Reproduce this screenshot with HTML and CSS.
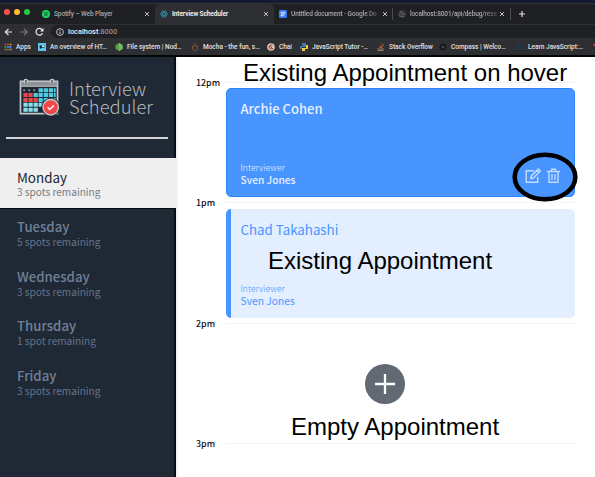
FILE: index.html
```html
<!DOCTYPE html>
<html lang="en">
<head>
<meta charset="utf-8">
<title>Interview Scheduler</title>
<link rel="stylesheet" href="styles.css">
</head>
<body>
<header class="browser">
  <div class="tabs">
    <div class="lights"><i class="red"></i><i class="yellow"></i><i class="green"></i></div>
    <div class="tab tab-spotify">
      <svg class="fav" viewBox="0 0 8 8"><circle cx="4" cy="4" r="4" fill="#1ed760"/><path d="M1.8 2.8q2.5-.8 4.6.4M2 4.2q2-.6 3.8.3M2.2 5.4q1.7-.4 3 .3" stroke="#14532d" stroke-width=".8" fill="none"/></svg>
      <span class="label">Spotify – Web Player</span><svg class="x" viewBox="0 0 6 6"><path d="M1 1l4 4M5 1L1 5"/></svg>
    </div>
    <div class="tab tab-active">
      <svg class="fav" viewBox="0 0 8 8" fill="none" stroke="#2d8aa5" stroke-width=".8"><ellipse cx="4" cy="4" rx="3.6" ry="1.4"/><ellipse cx="4" cy="4" rx="3.6" ry="1.4" transform="rotate(60 4 4)"/><ellipse cx="4" cy="4" rx="3.6" ry="1.4" transform="rotate(120 4 4)"/></svg>
      <span class="label">Interview Scheduler</span><svg class="x" viewBox="0 0 6 6"><path d="M1 1l4 4M5 1L1 5"/></svg>
    </div>
    <div class="tab tab-docs">
      <svg class="fav" viewBox="0 0 8 8"><rect width="8" height="8" rx="1" fill="#3478f6"/><path d="M1.7 2.3h4.6M1.7 4h4.6M1.7 5.7h3" stroke="#fff" stroke-width=".9"/></svg>
      <span class="label fade">Untitled document - Google Do</span><svg class="x" viewBox="0 0 6 6"><path d="M1 1l4 4M5 1L1 5"/></svg>
    </div>
    <div class="tab tab-api">
      <svg class="fav" viewBox="0 0 8 8"><circle cx="4" cy="4" r="3.5" fill="#55575b"/><path d="M1 3l2 1 .5 2M4 1l1 1.5 2 .5M5 5l1.5.5" stroke="#222327" fill="none"/></svg>
      <span class="label fade">localhost:8001/api/debug/rese</span><svg class="x" viewBox="0 0 6 6"><path d="M1 1l4 4M5 1L1 5"/></svg>
    </div>
    <svg class="plus" viewBox="0 0 8 8"><path d="M4 1v6M1 4h6"/></svg>
  </div>
  <div class="toolbar">
    <svg class="nav" viewBox="0 0 40 10" fill="none" stroke-width="1.2"><path d="M8 5H1.500M4.500 1.800L1.300 5l3.200 3.200" stroke="#e8e8ea"/><path d="M16.500 5H23M20 1.800L23.200 5 20 8.200" stroke="#77797e"/><path d="M38.300 3A3.400 3.400 0 1 0 38.500 6.200" stroke="#e8e8ea"/><path d="M39.500 1v3.500H36z" fill="#e8e8ea"/></svg>
    <div class="address">
      <svg class="info" viewBox="0 0 8 8"><circle cx="4" cy="4" r="3.400" fill="none" stroke="#bfc0c3"/><path d="M4 3.500V6M4 1.800v1" stroke="#d0d0d2"/></svg>
      <span class="url"><b>localhost</b>:8000</span>
    </div>
  </div>
  <nav class="bookmarks">
    <a class="b1"><svg class="fav" viewBox="0 0 8 8"><path d="M.5 1.500h1.800M.5 6.500h1.800" stroke="#e5483a" stroke-width="1.600"/><path d="M3 1.500h1.800" stroke="#e5483a" stroke-width="1.600"/><path d="M5.700 1.500h1.800M5.700 6.500h1.800" stroke="#f0a030" stroke-width="1.600"/><path d="M.5 4h1.800M3 6.500h1.800" stroke="#3ba55d" stroke-width="1.600"/><path d="M3 4h4.500" stroke="#4285f4" stroke-width="1.600"/></svg><span>Apps</span></a>
    <a class="b2"><svg class="fav" viewBox="0 0 8 8"><path d="M0 0h8v8H0z" fill="#62c3ee"/><path d="M1.500 2.500h4.800v2.300H3.500L2 6z" fill="#112633"/><circle cx="5" cy="3.300" r="1" fill="#fff"/></svg><span>An overview of HT…</span></a>
    <a class="b3"><svg class="fav" viewBox="0 0 8 8"><path d="M4 0l3.500 2v4L4 8 .5 6V2z" fill="#54a044"/><path d="M4 0l3.500 2v4L4 8z" fill="#78b96b"/></svg><span>File system | Nod…</span></a>
    <a class="b4"><svg class="fav" viewBox="0 0 8 8"><path d="M1.500 3h5v3L5 7.500H3L1.500 6z" fill="none" stroke="#815438"/><path d="M4 0v2" stroke="#815438"/></svg><span>Mocha - the fun, s…</span></a>
    <a class="b5"><svg class="fav" viewBox="0 0 8 8"><circle cx="4" cy="4" r="3.800" fill="#d9c6b8"/><path d="M5.500 2.500a2 2 0 1 0 0 3M3 3l3 3" stroke="#a4352e" fill="none"/></svg><span>Chai</span></a>
    <a class="b6"><svg class="fav" viewBox="0 0 8 8"><path d="M2 0h4v4H2v2H0V3h3V2H2z" fill="#3b7ab8"/><path d="M6 2h2v4H5v2H2V5h4z" fill="#f3cb42"/></svg><span>JavaScript Tutor -…</span></a>
    <a class="b7"><svg class="fav" viewBox="0 0 8 8"><path d="M1 5v2.500h5V5" stroke="#89827b" fill="none"/><path d="M2 6h3M2 4.300l3 .5M3 2.500l2.800 1.300M5 .5l2 2.500" stroke="#cf5c2b"/></svg><span>Stack Overflow</span></a>
    <a class="b8"><svg class="fav" viewBox="0 0 8 8"><circle cx="4" cy="4" r="3" fill="#222225" stroke="#111"/><circle cx="4" cy="4" r="1" fill="#555"/></svg><span>Compass | Welco…</span></a>
    <a class="b9"><svg class="fav" viewBox="0 0 8 8"><path d="M1 1h6v6H1z" fill="#253643"/></svg><span>Learn JavaScript:…</span></a>
    <a class="b10"><svg class="fav" viewBox="0 0 8 8"><path d="M0 1h4L2 4z" fill="#dc4545"/></svg></a>
  </nav>
</header>
<main class="layout">
  <section class="sidebar">
    <div class="brand">
      <svg class="logo" viewBox="0 0 42 40">
        <path d="M2 3.500h38v33H2z" fill="#1f2935" stroke="#c3c6ca" stroke-width="1.700"/>
        <path d="M2 3.500h38v5H2z" fill="#8f9398" stroke="#c4c6c9" stroke-width="1"/>
        <path d="M6 5.500V1.500h3v4M33 5.500V1.500h3v4" fill="#666c74" stroke="#d6d7d9"/>
        <path d="M5 12.500h15" stroke="#b6babe" stroke-width="1.500" stroke-dasharray="1.500 3.700"/>
        <g stroke-width="4.200" stroke-dasharray="4.400 .8">
          <path d="M20.600 12.500h17.500M25.800 17.500h12.300M25.800 22.500h12.300" stroke="#4dcbe0"/>
          <path d="M5 27.500h20M5 32.500h15" stroke="#8be0ea"/>
          <path d="M5 17.500h9.400M5 22.500h14.600" stroke="#ed4545"/>
          <path d="M15.400 17.500h9.400M20.600 22.500h4.200" stroke="#4dcbe0"/>
        </g>
        <circle cx="33" cy="30" r="9.600" fill="#1f2935"/><circle cx="33" cy="30" r="7.900" fill="#f34649" stroke="#c3c5c8" stroke-width="1.500"/><path d="M29.800 30l2.300 2.300 4.200-4.200" fill="none" stroke="#f2f2f2" stroke-width="1.600"/>
      </svg>
      <h1>Interview<br>Scheduler</h1>
    </div>
    <hr>
    <ul class="days">
      <li class="selected"><h2>Monday</h2><p>3 spots remaining</p></li>
      <li><h2>Tuesday</h2><p>5 spots remaining</p></li>
      <li><h2>Wednesday</h2><p>3 spots remaining</p></li>
      <li><h2>Thursday</h2><p>1 spot remaining</p></li>
      <li><h2>Friday</h2><p>3 spots remaining</p></li>
    </ul>
  </section>
  <section class="schedule">
    <article class="slot"><time>12pm</time>
      <div class="cell"><div class="card hover"><h3>Archie Cohen</h3><div class="foot"><h4>Interviewer</h4><h5>Sven Jones</h5></div>
        <svg class="actions" viewBox="0 0 36 16" fill="none" stroke="#c4dcff" stroke-width="1.400"><path d="M9 2.700H1.200v11.600h11.600V9"/><path d="M5.800 10.500l.5-2.600 7-7 2.100 2.100-7 7zM11.700 2.500l2.100 2.100"/><path d="M22 3.500h13M24 3.500v10.800h9V3.500M26.500 3.300V1.200h4v2.100M27 6v6M30 6v6"/></svg>
      </div></div></article>
    <article class="slot"><time>1pm</time>
      <div class="cell"><div class="card booked"><h3>Chad Takahashi</h3><div class="foot"><h4>Interviewer</h4><h5>Sven Jones</h5></div></div></div></article>
    <article class="slot"><time>2pm</time>
      <div class="cell empty"><svg class="add" viewBox="0 0 40 40"><circle cx="20" cy="20" r="20" fill="#626973"/><path d="M20 10v20M10 20h20" stroke="#fff" stroke-width="2.300"/></svg></div></article>
    <article class="slot last"><time>3pm</time><div class="cell"></div></article>
    <svg class="ring" viewBox="0 0 66 50"><ellipse cx="33" cy="25" rx="30.300" ry="22.300" fill="none" stroke="#000" stroke-width="4.600"/></svg>
    <p class="note note-hover">Existing Appointment on hover</p>
    <p class="note note-existing">Existing Appointment</p>
    <p class="note note-empty">Empty Appointment</p>
  </section>
</main>
</body>
</html>
```
FILE: styles.css
```css
* { box-sizing: border-box; margin: 0; padding: 0; }
body { width: 595px; height: 477px; overflow: hidden; background: #fff; font-family: "Noto Sans CJK JP", sans-serif; }
h1, h2, h3, h4, h5 { font-weight: 400; white-space: nowrap; }
svg { display: block; flex: none; overflow: visible; }

.browser { height: 57px; border-bottom: 2px solid #050505; background: #2e2f33; font: 500 6.5px/8px Roboto, sans-serif; color: #e1e1e3; }
.tabs { height: 24px; border-top: 3px solid #141c30; background: #1f2024; display: flex; align-items: center; padding-left: 4px; box-shadow: inset 0 1px #343539; }
.lights { display: flex; gap: 4px; width: 38px; margin-top: -3px; }
.lights i { width: 6px; height: 6px; border-radius: 50%; }
.red { background: #fe5149; }
.yellow { background: #fdbc2e; }
.green { background: #28c840; }
.fav { width: 8px; height: 8px; }
.tab { display: flex; align-items: center; color: #a7a8ac; white-space: nowrap; }
.tab .label { flex: 1; min-width: 0; margin-left: 4px; }
.x { width: 6px; height: 6px; fill: none; stroke: #d0d0d3; stroke-width: .9; }
.tab-spotify { width: 113px; padding-right: 5px; letter-spacing: -.1px; }
.tab-active { width: 119px; height: 20px; margin-top: 1px; padding: 0 5px; border-radius: 5px 5px 0 0; background: #2e2f33; color: #ededee; }
.tab-active .label { font-weight: 700; letter-spacing: -.1px; }
.tab-docs { width: 119px; height: 12px; padding: 0 4px 0 5px; border-right: 1px solid #4a4b50; }
.tab-api { width: 118px; height: 12px; padding: 0 5px; border-right: 1px solid #4a4b50; }
.tab-docs .label, .tab-api .label { letter-spacing: -.12px; }
.fade { mask-image: linear-gradient(90deg, #000 80%, transparent 105%); }
.plus { width: 8px; height: 8px; margin-left: 7px; stroke: #ddd; stroke-width: 1.2; }
.toolbar { height: 15px; display: flex; align-items: center; padding-left: 4px; }
.nav { width: 40px; height: 10px; }
.address { flex: 1; height: 13px; margin-left: 7px; padding-left: 5px; display: flex; align-items: center; gap: 4px; border-radius: 7px 0 0 7px; background: #1f2024; }
.info { width: 8px; height: 8px; }
.url { font-size: 7.4px; color: #8f9094; }
.url b { color: #f0f0f1; font-weight: 500; }
.bookmarks { height: 16px; display: flex; align-items: center; padding-left: 4px; }
.bookmarks a { display: flex; align-items: center; gap: 4px; flex: none; white-space: nowrap; }
.b1 { width: 34px; }
.b2 { width: 77px; }
.b3 { width: 76px; }
.b4 { width: 76px; }
.b5 { width: 33px; }
.b6 { width: 77px; }
.b7 { width: 62px; }
.b8 { width: 77px; }
.b9 { width: 77px; }

.layout { display: flex; height: 420px; overflow: hidden; }
.sidebar { width: 176px; flex: none; background: #1f2935; border-right: 2px solid #080d16; }
.brand { display: flex; height: 80px; padding: 21px 0 0 18px; gap: 9px; }
.logo { width: 42px; height: 39px; }
.brand h1 { font-size: 18.4px; line-height: 18px; font-weight: 300; color: #b4b6b9; padding-top: 1px; }
.sidebar hr { margin: 0 6px; width: 162px; border: 0; height: 2px; background: #d2d4d7; }
.days { margin-top: 19px; list-style: none; }
.days li { height: 49.6px; padding: 10px 0 0 17px; color: #718096; white-space: nowrap; }
.days .selected { width: 176px; height: 51px; margin-bottom: -1px; background: #efefef; color: #1c2430; border-bottom: 1px solid #080a0e; }
.days h2 { font-size: 13.2px; line-height: 18px; font-weight: 500; }
.days .selected h2 { font-size: 13.4px; font-weight: 400; }
.days p { font-size: 10.1px; line-height: 13px; font-weight: 400; margin-top: -1px; color: #65748a; }
.days .selected p { color: #777b82; }

.schedule { position: relative; flex: 1; padding: 25px 20px 0 20px; border-right: 1px solid #b5b5b5; box-shadow: inset 2px 0 #f2f2f3; }
.slot { display: grid; grid-template-columns: 29.5px 349px; height: 120.4px; }
.last { height: 20px; }
.slot time { font-size: 8.9px; line-height: 12px; font-weight: 500; margin-top: -5px; color: #111; }
.cell { border-top: 1px solid #f2f3f4; padding-top: 5px; }
.card { position: relative; height: 109px; border-radius: 5px; padding: 12px 15px 11px; display: flex; flex-direction: column; justify-content: space-between; }
.card h3 { font-size: 13px; line-height: 18px; font-weight: 500; }
.card h4 { font-size: 8.7px; line-height: 11px; font-weight: 300; }
.card h5 { font-size: 10.2px; line-height: 13px; font-weight: 500; }
.hover { background: #4995ff; border: 1px solid #2f85fb; color: #e6f0ff; padding: 11px 14px 10px; margin-top: -.5px; }
.booked { background: #e3eeff; border-left: 5px solid #4995ff; color: #4995ff; padding-left: 10px; margin-top: .6px; }
.booked h3 { font-size: 13.3px; font-weight: 400; }
.booked h5 { font-size: 10.3px; font-weight: 400; }
.actions { position: absolute; right: 13px; bottom: 12px; width: 36px; height: 16px; }
.empty { display: flex; justify-content: center; align-items: center; }
.add { width: 40px; height: 40px; margin-right: 30px; margin-top: -4px; }
.ring { position: absolute; left: 336px; top: 95px; width: 66px; height: 50px; }
.note { position: absolute; font: 24px/28px "Liberation Sans", sans-serif; color: #000; white-space: nowrap; }
.note-hover { left: 67px; top: 2px; }
.note-existing { left: 92px; top: 190px; }
.note-empty { left: 115px; top: 356px; }
```
